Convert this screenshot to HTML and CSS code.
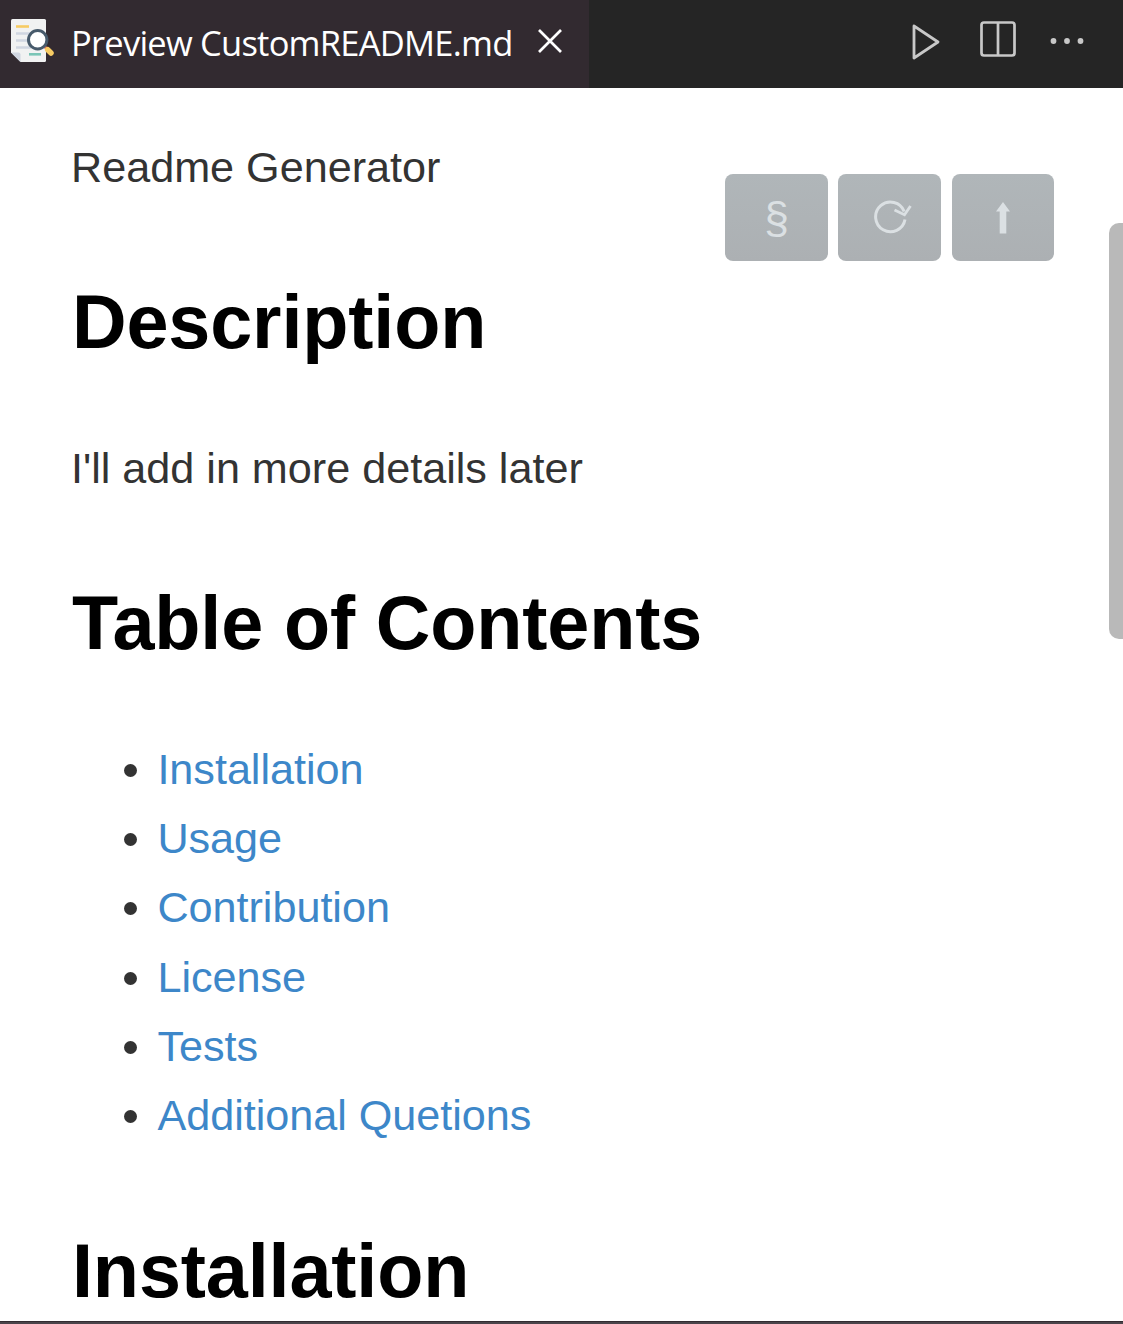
FILE: index.html
```html
<!DOCTYPE html>
<html lang="en">
<head>
<meta charset="utf-8">
<title>Preview CustomREADME.md</title>
<link rel="stylesheet" href="styles.css">
</head>
<body>
<div class="window">
  <header class="tabbar">
    <div class="tab">
      <svg class="file-icon" width="44" height="44" viewBox="0 0 44 44">
        <path d="M1.500 0H33.500Q35 0 35 1.500V41.500Q35 43 33.500 43H9.500L0 33.500V1.500Q0 0 1.500 0Z" fill="#f1f2f2"/>
        <path d="M0 33.500H7.500Q9.500 33.500 9.500 35.500V43Z" fill="#cfd5e0"/>
        <path d="M5 7.500H18" stroke="#f7cb63" stroke-width="2.600"/>
        <path d="M5 14.500H20M5 21.500H17M5 28.500H20" stroke="#d0d6e1" stroke-width="2.600"/>
        <path d="M18 35.300H30" stroke="#7ac5b6" stroke-width="2.600"/>
        <path d="M34 28L37 31" stroke="#e56353" stroke-width="3"/>
        <path d="M36.700 30.700L40 34" stroke="#f7cb63" stroke-width="5.500" stroke-linecap="round"/>
        <circle cx="26.700" cy="20.700" r="9.200" fill="#fff" stroke="#475a6b" stroke-width="3"/>
      </svg>
      <span class="tab-title">Preview CustomREADME.md</span>
      <svg class="close" width="24" height="24" viewBox="0 0 24 24"><path d="M1 1L23 23M23 1L1 23" stroke="#fff" stroke-width="2.700"/></svg>
    </div>
    <div class="actions">
      <svg class="run" width="28" height="36" viewBox="0 0 28 36"><path d="M2 2L26 18L2 34Z" fill="none" stroke="#c8c8c8" stroke-width="2.800" stroke-linejoin="round"/></svg>
      <svg class="split" width="36" height="36" viewBox="0 0 36 36"><rect x="1.500" y="1.500" width="33" height="33" rx="2.500" fill="none" stroke="#c8c8c8" stroke-width="2.700"/><path d="M18 2V34" stroke="#c8c8c8" stroke-width="2.700"/></svg>
      <svg class="more" width="34" height="6" viewBox="0 0 34 6" fill="#c8c8c8"><circle cx="3.500" cy="3" r="2.900"/><circle cx="17" cy="3" r="2.900"/><circle cx="30.500" cy="3" r="2.900"/></svg>
    </div>
  </header>
  <main class="preview">
    <p>Readme Generator</p>
    <h2>Description</h2>
    <p>I'll add in more details later</p>
    <h2>Table of Contents</h2>
    <ul>
      <li><a>Installation</a></li>
      <li><a>Usage</a></li>
      <li><a>Contribution</a></li>
      <li><a>License</a></li>
      <li><a>Tests</a></li>
      <li><a>Additional Quetions</a></li>
    </ul>
    <h2>Installation</h2>
  </main>
  <div class="toolbar">
    <div class="tool">§</div>
    <div class="tool"><svg class="refresh" width="38" height="34" viewBox="0 0 38 34" fill="none" stroke="#dbe0e3"><path d="M31 19.500A14.800 14.800 0 1 1 30.200 11.500" stroke-width="3"/><path d="M20.500 10L30.500 14.800L36.500 6" stroke-width="2.800"/></svg></div>
    <div class="tool"><svg class="top" width="14" height="32" viewBox="0 0 14 32"><path d="M7 0L14 9.500H10.300V31.500H3.700V9.500H0Z" fill="#dbe0e3"/></svg></div>
  </div>
  <div class="scroll-thumb"></div>
  <footer class="panel-edge"></footer>
</div>
</body>
</html>
```

FILE: styles.css
```css
* { box-sizing: border-box; }
body { margin: 0; background: #fff; }
svg { display: block; flex: none; }
.window {
  position: relative;
  display: flex;
  flex-direction: column;
  width: 1123px;
  height: 1324px;
  overflow: hidden;
}
.tabbar {
  display: flex;
  flex: none;
  justify-content: space-between;
  height: 88px;
  background: #252525;
}
.tab {
  display: flex;
  width: 589px;
  padding-left: 11px;
  background: #322a30;
}
.file-icon { margin-top: 19px; }
.tab-title {
  width: 441px;
  margin-left: 16px;
  font: 34.5px/85px "Open Sans", "Noto Sans", sans-serif;
  letter-spacing: -0.77px;
  color: #fff;
  white-space: nowrap;
}
.close { margin: 29px 0 0 26px; }
.actions { display: flex; padding: 23px 39px 0 0; }
.run { margin-top: 1px; }
.split { margin: -2px 0 0 40px; }
.more { margin: 15px 0 0 34px; }
.preview {
  flex: 1;
  min-height: 0;
  overflow: hidden;
  padding: 44.5px 71px 0;
  font: 43.2px/1.6 "Liberation Sans", Arial, sans-serif;
  color: #333;
}
.preview p { margin: 0; letter-spacing: -0.02px; }
.preview h2 {
  margin: 75.3px 0 66px;
  padding-left: 1px;
  font-size: 75.6px;
  line-height: 1.2;
  letter-spacing: -0.15px;
  color: #000;
}
.preview ul { margin: 0; padding-left: 86.4px; line-height: 69.25px; }
.preview a { color: #3d87c9; letter-spacing: -0.03px; }
.toolbar {
  position: absolute;
  top: 174px;
  left: 725px;
  display: grid;
  grid-template-columns: 103px 103px 102px;
  column-gap: 10px;
  width: 329px;
  justify-content: space-between;
}
.tool {
  display: flex;
  justify-content: center;
  height: 87px;
  border-radius: 8px;
  background: linear-gradient(#b0b6b9, #acb0b3);
  font: 44.5px/88px "Liberation Sans", Arial, sans-serif;
  color: #dbe0e3;
}
.tool:nth-child(2) { margin: 0 0.5px 0 -0.5px; }
.refresh { margin: 26px 0 0 7px; }
.top { margin-top: 27.5px; }
.scroll-thumb {
  position: absolute;
  top: 223px;
  right: 0;
  width: 14px;
  height: 416px;
  border-radius: 10px 0 0 10px;
  background: #b9b9b9;
}
.panel-edge {
  flex: none;
  height: 3px;
  border-top: 1px solid #322c31;
  background: #4a444a;
}
```
